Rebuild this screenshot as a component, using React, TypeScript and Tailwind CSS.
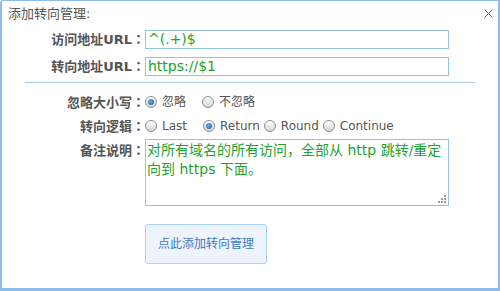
import React from 'react';

const font = "font-['DejaVu_Sans','Noto_Sans_CJK_SC',sans-serif]";

const Label = ({ text, className = '' }: { text: string; className?: string }) => (
  <label className={`w-[143px] text-right text-[13px] leading-[16px] font-bold text-[#555] ${className}`}>
    {text}
    <span className="font-['Noto_Sans_CJK_TC',sans-serif]">：</span>
  </label>
);

const Radio = ({ checked, label, className = '' }: { checked?: boolean; label: string; className?: string }) => (
  <span className={`flex items-center ${className}`}>
    <span className="flex h-[12px] w-[12px] items-center justify-center rounded-full border border-[#8e8f8f] bg-[linear-gradient(#ffffff,#d5d5d5)]">
      {checked && (
        <span className="h-[6px] w-[6px] rounded-full bg-[radial-gradient(circle_at_40%_40%,#6fb4f0,#0d4f99)]" />
      )}
    </span>
    <span className="ml-[5px] text-[12px] leading-[16px] text-[#555]">{label}</span>
  </span>
);

export default function App() {
  return (
    <div className={`relative h-[291px] w-[500px] rounded-tl-[3px] border-t border-r-2 border-b-[3px] border-l-2 border-[#8cbcec] bg-white ${font}`}>
      {/* header */}
      <div className="pt-[5px] pl-[6px] text-[13px] leading-[16px] text-[#555]">添加转向管理:</div>
      <svg className="absolute top-[8px] right-[5px]" width="9" height="9" viewBox="0 0 9 9">
        <path d="M0.5 0.5L8.5 8.5M8.5 0.5L0.5 8.5" stroke="#1a73c8" strokeWidth="1" />
      </svg>

      {/* url rows */}
      <div className="mt-[8px] flex items-center">
        <Label text="访问地址URL" />
        <div className="h-[19px] w-[304px] border border-[#92c6e0] px-[2px] text-[14px] leading-[17px] text-[#22a22e]">^(.+)$</div>
      </div>
      <div className="mt-[8px] flex items-center">
        <Label text="转向地址URL" />
        <div className="h-[19px] w-[304px] border border-[#92c6e0] px-[2px] text-[14px] leading-[17px] text-[#22a22e]">https://$1</div>
      </div>

      <div className="mt-[6px] ml-[23px] h-px w-[450px] bg-[#a9c7e0]" />

      {/* options */}
      <div className="mt-[11px] flex h-[16px] items-center">
        <Label text="忽略大小写" />
        <Radio checked label="忽略" />
        <Radio label="不忽略" className="ml-[16px]" />
      </div>
      <div className="mt-[8px] flex h-[16px] items-center">
        <Label text="转向逻辑" />
        <Radio label="Last" />
        <Radio checked label="Return" className="ml-[16px]" />
        <Radio label="Round" className="ml-[4px]" />
        <Radio label="Continue" className="ml-[4px]" />
      </div>

      {/* note */}
      <div className="mt-[5px] flex items-start">
        <Label text="备注说明" className="pt-[3px]" />
        <div className="relative">
          <textarea
            readOnly
            wrap="off"
            className="block h-[67px] w-[304px] resize-none overflow-hidden border border-[#92c6e0] px-[1px] pt-[1px] text-[14px] leading-[19px] text-[#22a22e] outline-none"
            defaultValue={'对所有域名的所有访问，全部从 http 跳转/重定\n向到 https 下面。'}
          />
          <svg className="absolute right-[3px] bottom-[3px]" width="8" height="8" viewBox="0 0 8 8">
            <g fill="#9a9a9a">
              <rect x="6" y="0" width="2" height="2" />
              <rect x="3" y="3" width="2" height="2" />
              <rect x="6" y="3" width="2" height="2" />
              <rect x="0" y="6" width="2" height="2" />
              <rect x="3" y="6" width="2" height="2" />
              <rect x="6" y="6" width="2" height="2" />
            </g>
          </svg>
        </div>
      </div>

      {/* submit */}
      <button className="mt-[18px] ml-[143px] h-[40px] w-[122px] rounded-[3px] border border-[#aad0f5] bg-[#eef4fd] text-[12px] text-[#3a78c8]">
        点此添加转向管理
      </button>
    </div>
  );
}
